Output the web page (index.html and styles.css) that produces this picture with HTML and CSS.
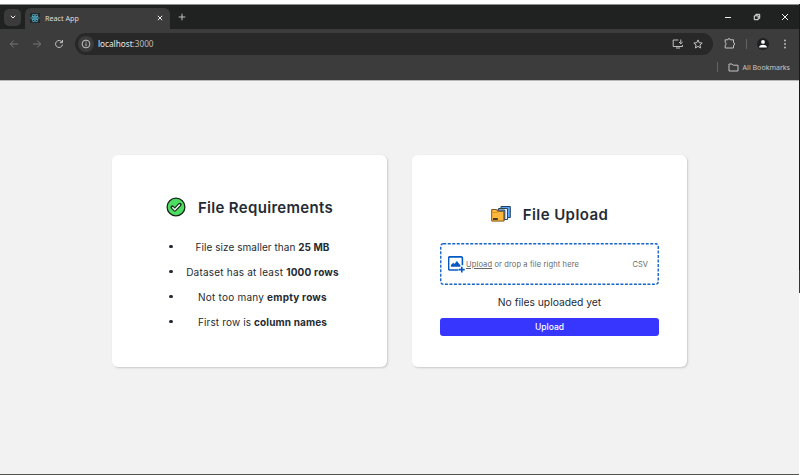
FILE: index.html
```html
<!DOCTYPE html>
<html lang="en">
<head>
<meta charset="utf-8">
<title>React App</title>
<link rel="stylesheet" href="styles.css">
</head>
<body>
<div class="desktop">
<div class="window">
  <div class="tabstrip">
    <span class="tab-search"><svg width="8" height="8" viewBox="0 0 8 8"><path d="M1.800 2.800 4 5l2.200-2.200" class="ln bright"/></svg></span>
    <div class="tab">
      <svg class="favicon" width="10" height="10" viewBox="0 0 10 10"><rect width="10" height="10" rx="1" fill="#20262b"/><g fill="none" stroke="#58b5cd" stroke-width=".7"><ellipse cx="5" cy="5" rx="4.300" ry="1.700"/><ellipse cx="5" cy="5" rx="4.300" ry="1.700" transform="rotate(60 5 5)"/><ellipse cx="5" cy="5" rx="4.300" ry="1.700" transform="rotate(120 5 5)"/></g><circle cx="5" cy="5" r=".9" fill="#58b5cd"/></svg>
      <span class="tab-title">React App</span>
      <svg width="6" height="6" viewBox="0 0 6 6"><path d="M.8.8l4.400 4.400M5.200.8.8 5.200" class="ln bright"/></svg>
    </div>
    <svg class="plus" width="8" height="8" viewBox="0 0 8 8"><path d="M4 .7v6.600M.7 4h6.600" class="ln"/></svg>
    <div class="controls">
      <svg width="8" height="8" viewBox="0 0 8 8"><path d="M1 4.500h6" class="ln bright"/></svg>
      <svg width="8" height="8" viewBox="0 0 8 8"><path d="M2.800 2V1.300h3.900v4H6M1.300 2.800h3.900v3.900H1.300z" class="ln bright"/></svg>
      <svg width="8" height="8" viewBox="0 0 8 8"><path d="M1 1l6 6M7 1 1 7" class="ln bright"/></svg>
    </div>
  </div>
  <div class="toolbar">
    <div class="nav">
      <svg width="10" height="10" viewBox="0 0 10 10"><path d="M9 5H1.300M4.800 1.500 1.300 5l3.500 3.500" class="ln dim"/></svg>
      <svg width="10" height="10" viewBox="0 0 10 10"><path d="M1 5h7.700M5.200 1.500 8.700 5 5.200 8.500" class="ln dim"/></svg>
      <svg width="10" height="10" viewBox="0 0 10 10"><path d="M8 3.100A3.500 3.500 0 1 0 8.500 5.600M8.500 1v2.700H5.800" class="ln"/></svg>
    </div>
    <div class="omnibox">
      <span class="info"><svg width="10" height="10" viewBox="0 0 10 10"><circle cx="5" cy="5" r="3.900" class="ln"/><path d="M5 4.500v2.700M5 2.600v1" class="ln"/></svg></span>
      <span class="url">localhost<span class="port">:3000</span></span>
      <svg class="install" width="12" height="10" viewBox="0 0 12 10"><path d="M6.300 1H1.200v6.500h9.300V6M4 9h4M8.800.5v4M7 3l1.800 1.800L10.700 3" class="ln"/></svg>
      <svg width="10" height="10" viewBox="0 0 10 10"><path d="M5 .9l1.200 2.800 3 .3-2.300 2 .7 3L5 7.400 2.400 9l.7-3L.8 4l3-.3z" class="ln"/></svg>
    </div>
    <svg class="ext" width="11" height="11" viewBox="0 0 11 11"><path d="M1.200 1.800h2.600a1.200 1.200 0 0 1 2.400 0H9.500v3a1.200 1.200 0 0 1 0 2.400v2.800H1.200V7.200a1.300 1.300 0 0 0 0-2.500z" class="ln"/></svg>
    <span class="sep"></span>
    <span class="avatar"><svg width="12" height="12" viewBox="0 0 12 12"><circle cx="6" cy="3.900" r="1.900" fill="#fff"/><path d="M2.200 9.400V8.500Q3 6.700 6 6.700t3.800 1.800v.9z" fill="#fff"/></svg></span>
    <svg class="menu" width="4" height="10" viewBox="0 0 4 10" fill="#c4c4c4"><circle cx="2" cy="1.500" r=".9"/><circle cx="2" cy="5" r=".9"/><circle cx="2" cy="8.500" r=".9"/></svg>
  </div>
  <div class="bookmarks">
    <span class="sep"></span>
    <svg width="11" height="9" viewBox="0 0 11 9"><path d="M1 1h3l1.200 1.200H10V8H1z" class="ln"/></svg>
    <span>All Bookmarks</span>
  </div>
  <main class="page">
    <section class="card requirements">
      <h2 class="heading">
        <svg width="20" height="20" viewBox="0 0 20 20"><circle cx="10" cy="10" r="8.900" fill="#4ddd61" stroke="#18251c" stroke-width="1.300"/><path d="M6.300 10.300l2.500 2.500 5-5.200" fill="none" stroke="#17301c" stroke-width="3.700" stroke-linejoin="round" stroke-linecap="round"/><path d="M6.300 10.300l2.500 2.500 5-5.200" fill="none" stroke="#edf8ef" stroke-width="1.500"/></svg>
        <span class="title-req">File Requirements</span>
      </h2>
      <ul class="rules">
        <li><span class="r1">File size smaller than <b>25 MB</b></span></li>
        <li><span class="r2">Dataset has at least <b>1000 rows</b></span></li>
        <li><span class="r3">Not too many <b>empty rows</b></span></li>
        <li><span class="r4">First row is <b>column names</b></span></li>
      </ul>
    </section>
    <section class="card upload">
      <h2 class="heading">
        <svg width="20" height="18" viewBox="0 0 20 18"><path d="M10 1.500h9.300v11H10z" fill="#57a6ff" stroke="#24405f"/><path d="M7.500 3.500h9v11h-9z" fill="#edf4fc" stroke="#33475a"/><path d="M5.500 5h8.300v10H5.500z" fill="#62a9f5" stroke="#33475a"/><path d="M.7 4.500h4.600l1.400 1.800h6.200v9.800H.7z" fill="#ffb83b" stroke="#6c4818" stroke-width=".9"/><path d="M1.500 7.500h5L8 6.500" fill="none" stroke="#cf861d" stroke-width=".7"/><path d="M2 13h4.800v2H2z" fill="#49391f"/></svg>
        <span class="title-up">File Upload</span>
      </h2>
      <div class="dropzone">
        <svg class="dashes" width="219" height="42"><rect x=".75" y=".75" width="217.500" height="40.500" rx="2.500"/></svg>
        <svg width="18" height="18" viewBox="0 0 18 18"><path d="M10.500 15H1.800q-1.200 0-1.200-1.200V3.100q0-1.200 1.200-1.200h11.400q1.200 0 1.200 1.200v7.200M13.800 11.700v5.800M10.900 14.600h5.800" fill="none" stroke="#0658c2" stroke-width="1.600"/><path d="M2.900 11.800V10L5.300 7.700l1.200 1.200L8.800 6l3.600 4.200v1.600z" fill="#0658c2"/></svg>
        <span class="hint"><u>Upload</u> or drop a file right here</span>
        <span class="types">CSV</span>
      </div>
      <p class="status"><span>No files uploaded yet</span></p>
      <button class="submit">Upload</button>
    </section>
  </main>
</div>
<div class="edge"></div>
</div>
</body>
</html>
```
FILE: styles.css
```css
* { box-sizing: border-box; }
body { margin: 0; background: #fff; font-family: Inter, "Liberation Sans", sans-serif; }
svg { display: block; flex: none; }
.ln { fill: none; stroke: #c2c2c2; stroke-width: 1; }
.bright { stroke: #eee; }
.dim { stroke: #777; }
.desktop { display: flex; height: 475px; padding-top: 4px; }
.window { width: 799px; height: 471px; display: flex; flex-direction: column; background: #3c3c3c; border-top: 1px solid #8b8e8d; border-bottom: 1px solid #55544b; }
.edge { width: 1px; height: 289px; background: linear-gradient(#171a1a 92%, #2c412b 92%); }
.tabstrip { height: 24px; background: #1f2221; display: flex; align-items: center; padding-left: 4px; font-family: "Noto Sans", sans-serif; }
.tab-search { width: 17px; height: 17px; border-radius: 5px; background: #3b3b3b; display: grid; place-items: center; }
.tab { align-self: flex-end; width: 145px; height: 21px; margin-left: 4px; padding: 0 7px 2px 5px; border-radius: 6px 6px 0 0; background: #3c3c3c; display: flex; align-items: center; gap: 5px; color: #dedede; font-size: 7.200px; }
.tab-title { flex: 1; }
.plus { margin-left: 8px; }
.controls { margin-left: auto; margin-right: 10px; display: flex; gap: 20.500px; }
.toolbar { height: 29px; display: flex; align-items: center; padding: 0 12px 0 9px; }
.nav { display: flex; gap: 12.500px; width: 66px; }
.omnibox { flex: none; width: 638px; height: 22px; border-radius: 11px; background: #282828; display: flex; align-items: center; padding: 0 10px 0 3px; }
.info { width: 16px; height: 16px; border-radius: 50%; background: #3c3c3c; display: grid; place-items: center; }
.url { margin-left: 4px; color: #e8e8e8; font: 8.200px "Noto Sans", sans-serif; }
.port { color: #bcbcbc; }
.install { margin-left: auto; margin-right: 9px; }
.ext { margin-left: 11px; }
.sep { width: 1px; height: 10px; background: #626262; }
.toolbar .sep { margin-left: 11px; }
.avatar { margin-left: 10px; width: 12px; height: 12px; border-radius: 50%; background: #1c2020; }
.menu { margin-left: auto; }
.bookmarks { height: 22px; padding: 0 9px 4px 0; display: flex; align-items: center; justify-content: flex-end; color: #c7c7c7; font: 7.050px "Noto Sans", sans-serif; }
.bookmarks svg { margin: 0 4px 0 10px; }
.page { flex: 1; border-top: 1px solid #b7b7b7; background: #f2f2f2; display: flex; align-items: flex-start; gap: 25px; padding: 74px 0 0 112px; color: #252b33; }
.card { width: 275px; height: 212px; border-radius: 6px; background: #fff; box-shadow: 1px 1px 2px #c9c9c9; display: flex; flex-direction: column; align-items: center; }
.heading { margin: 0; height: 20px; display: flex; align-items: center; gap: 12px; font-size: 15px; font-weight: 600; white-space: nowrap; }
.requirements { padding-top: 42px; }
.title-req { letter-spacing: .32px; }
.title-up { letter-spacing: .43px; }
.rules { list-style: none; width: 170px; margin: 17px 0 0 9px; padding: 0; font-size: 10px; }
.rules li { height: 25px; display: grid; grid-template-columns: 4px 153px; gap: 13px; align-items: center; justify-content: start; text-align: center; white-space: nowrap; }
.rules li::before { content: ""; width: 3.500px; height: 3.500px; border-radius: 50%; background: #252b33; }
.rules b { font-weight: 650; }
.r1 { letter-spacing: .05px; }
.r2 { letter-spacing: .21px; }
.r3 { letter-spacing: .22px; }
.r4 { letter-spacing: .13px; }
.upload { padding: 49px 28px 0; }
.dropzone { position: relative; width: 219px; height: 42px; margin-top: 19px; padding: 0 11px 0 8px; display: flex; align-items: center; color: #686868; font-size: 7.500px; }
.dashes { position: absolute; inset: 0; }
.dashes rect { fill: none; stroke: #1764cb; stroke-width: 1.400; stroke-dasharray: 3 1.500; }
.hint { white-space: nowrap; letter-spacing: .13px; }
.hint u { text-underline-offset: 1px; }
.types { margin-left: auto; }
.status { margin: 10px 0 9px; font-size: 10.300px; line-height: 14px; }
.submit { width: 219px; height: 18px; border: 0; border-radius: 3px; background: #3636ff; color: #fff; padding: 0; font: 500 8.500px Inter, sans-serif; }
```
